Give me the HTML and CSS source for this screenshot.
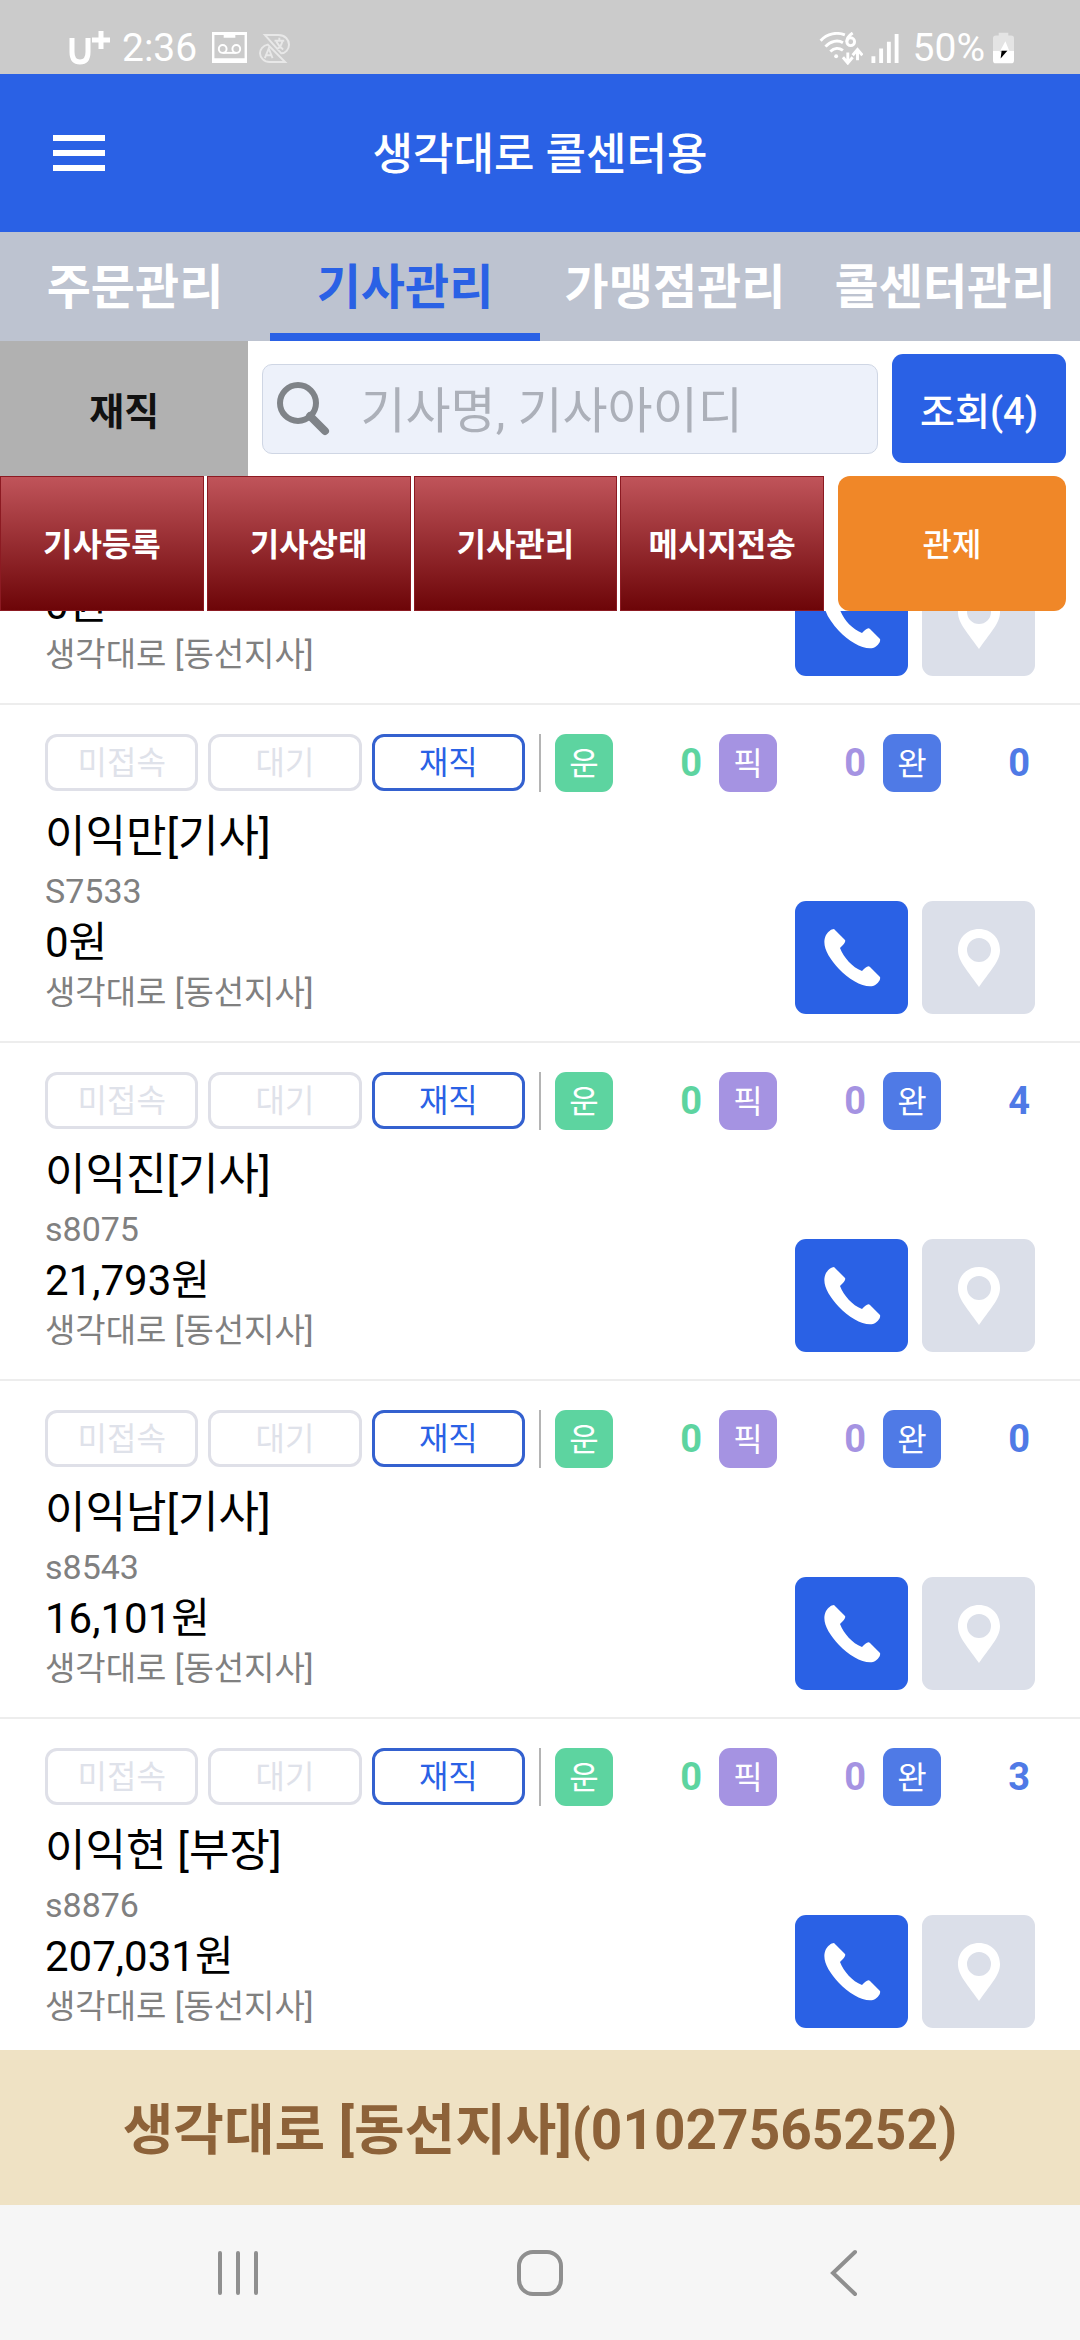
FILE: index.html
```html
<!DOCTYPE html>
<html lang="ko">
<head>
<meta charset="utf-8">
<meta name="viewport" content="width=device-width, initial-scale=1">
<title>생각대로 콜센터용</title>
<link rel="stylesheet" href="styles.css">
</head>
<body>
<svg class="defs" width="0" height="0" aria-hidden="true">
  <symbol id="phone" viewBox="0 0 58 58"><path d="M3 6C5 3 8 0 11 0l11 11c1 2-1 4-5 8 4 10 12 19 22 23 3-3 6-6 8-4l10 10c1 3-3 8-7 9-9 2-24-6-34-17C5 28-2 16 3 6z"/></symbol>
  <symbol id="pin" viewBox="0 0 42 58"><path fill-rule="evenodd" d="M21 0C9 0 0 9 0 21c0 10 6 16 21 37 15-21 21-27 21-37C42 9 33 0 21 0zm0 9a12 12 0 1 1 0 24 12 12 0 0 1 0-24z"/></symbol>
</svg>
<div class="app">
  <div class="status">
    <div class="status-side">
      <svg class="carrier" viewBox="0 0 42 34" aria-label="U+"><path d="M4 7v14c0 7 3 10 8 10s8-3 8-10V7M24 9h18M33 0v18" fill="none" stroke="#fff" stroke-width="5"/></svg>
      <span>2:36</span>
      <svg class="tape" viewBox="0 0 36 32" fill="none" stroke="#fff"><path d="M1 1h34v29H1z" stroke-width="3"/><path d="M12 3h12M2 29h32" stroke-width="5"/><circle cx="11" cy="17" r="4" stroke-width="2"/><circle cx="25" cy="17" r="4" stroke-width="2"/><path d="M11 21h14" stroke-width="2"/></svg>
      <svg class="translate" viewBox="0 0 32 30" fill="none" stroke="#e8e8e8" stroke-width="2"><path d="M6 1h14c7 0 11 5 11 10s-4 9-8 9zM9 11C4 12 1 16 1 20s4 9 10 9h16zM6 25l4-10 4 10M8 22h5M16 7h10M21 4v3M24 8c-1 4-4 7-6 8M18 8c2 4 4 6 7 8"/></svg>
    </div>
    <div class="status-side">
      <svg class="wifi" viewBox="0 0 44 34" fill="none" stroke="#fff" stroke-width="3"><path d="M1 9C8 1 18 0 26 3M6 15c5-6 13-7 18-4M11 20c4-4 9-4 13-1"/><circle cx="17" cy="25" r="2" fill="#fff" stroke="none"/><circle cx="32" cy="10" r="4"/><path d="M34 1c-3 2-6 5-6 9M29 21v10M24 26l5 6 5-6M39 29V19M34 24l5-6 5 6"/></svg>
      <svg class="signal" viewBox="0 0 28 30"><path fill="#fff" d="M0 23h4v7H0zM8 15h4v15H8zM16 8h4v22h-4zM24 0h4v30h-4z"/></svg>
      <span>50%</span>
      <svg class="battery" viewBox="0 0 22 32"><path fill="#e4e4e4" d="M6 0h10v3h3q3 0 3 3v13H0V6q0-3 3-3h3z"/><path fill="#fff" d="M0 19h22v10q0 3-3 3H3q-3 0-3-3zM13 9L7 20h5l5-1z"/><path d="M9 19h6l-7 8z"/></svg>
    </div>
  </div>

  <header class="header">
    <button class="menu" type="button" aria-label="메뉴"><span></span><span></span><span></span></button>
    <h1 class="title">생각대로 콜센터용</h1>
  </header>

  <nav class="tabs">
    <a class="tab" href="#orders">주문관리</a>
    <a class="tab tab-on" href="#drivers" aria-current="page">기사관리</a>
    <a class="tab" href="#shops">가맹점관리</a>
    <a class="tab" href="#center">콜센터관리</a>
  </nav>

  <form class="filter">
    <button class="filter-state" type="button">재직</button>
    <div class="filter-main">
      <label class="search">
        <svg class="search-icon" viewBox="0 0 54 54" fill="none" stroke="#7f8388"><circle cx="21" cy="21" r="18" stroke-width="6"/><path d="M33 34l15 15" stroke-width="8" stroke-linecap="round"/></svg>
        <input class="search-input" type="text" placeholder="기사명, 기사아이디" aria-label="기사 검색">
      </label>
      <button class="query" type="submit">조회(4)</button>
    </div>
  </form>

  <div class="actions">
    <div class="actions-red">
      <button class="action" type="button">기사등록</button>
      <button class="action" type="button">기사상태</button>
      <button class="action" type="button">기사관리</button>
      <button class="action" type="button">메시지전송</button>
    </div>
    <button class="control" type="button">관제</button>
  </div>

  <main class="list-view">
    <ul class="list" id="list"></ul>
  </main>

  <footer class="contact">생각대로 [동선지사](01027565252)</footer>

  <nav class="system">
    <button class="system-key" type="button" aria-label="최근 앱"><svg viewBox="0 0 48 48"><path d="M6 4v40M24 4v40M42 4v40"/></svg></button>
    <button class="system-key" type="button" aria-label="홈"><svg viewBox="0 0 48 48"><rect x="3" y="3" width="42" height="42" rx="14"/></svg></button>
    <button class="system-key" type="button" aria-label="뒤로"><svg viewBox="0 0 48 48"><path d="M37 3L15 24l22 21"/></svg></button>
  </nav>
</div>
<script src="list.js"></script>
</body>
</html>
```
FILE: list.js
```js
// The first row is scrolled under the toolbar, so only its lower lines are rendered.
const drivers = [
  { amount: '0원', scrolled: true },
  { name: '이익만[기사]', id: 'S7533', amount: '0원', done: 0 },
  { name: '이익진[기사]', id: 's8075', amount: '21,793원', done: 4 },
  { name: '이익남[기사]', id: 's8543', amount: '16,101원', done: 0 },
  { name: '이익현 [부장]', id: 's8876', amount: '207,031원', done: 3 },
];

const driverTop = (d) => `
    <div class="driver-top">
      <div class="pills">
        <span class="pill">미접속</span>
        <span class="pill">대기</span>
        <span class="pill pill-on">재직</span>
      </div>
      <div class="stats">
        <div class="stat stat-run"><span class="badge">운</span><b class="count">0</b></div>
        <div class="stat stat-pick"><span class="badge">픽</span><b class="count">0</b></div>
        <div class="stat stat-done"><span class="badge">완</span><b class="count">${d.done}</b></div>
      </div>
    </div>`;

const driverHeading = (d) => `
        <p class="name">${d.name}</p>
        <p class="driver-id">${d.id}</p>`;

document.getElementById('list').innerHTML = drivers.map((d) => `
  <li class="driver${d.scrolled ? ' driver-scrolled' : ''}">
    ${d.scrolled ? '' : driverTop(d)}
    <div class="driver-body">
      <div class="driver-info">
        ${d.scrolled ? '' : driverHeading(d)}
        <p class="amount">${d.amount}</p>
        <p class="branch">생각대로 [동선지사]</p>
      </div>
      <div class="driver-keys">
        <button class="key key-call" type="button" aria-label="전화"><svg class="icon-phone"><use href="#phone"/></svg></button>
        <button class="key key-pin" type="button" aria-label="위치"><svg class="icon-pin"><use href="#pin"/></svg></button>
      </div>
    </div>
  </li>`).join('');
```
FILE: styles.css
```css
* { box-sizing: border-box; }

body {
  margin: 0;
  background: #fff;
  color: #000;
  font-family: Roboto, "Noto Sans CJK KR", sans-serif;
}

button {
  margin: 0;
  padding: 0;
  border: 0;
  background: none;
  font: inherit;
  color: inherit;
  cursor: pointer;
}

svg { display: block; }
.defs { position: absolute; }

.app {
  display: flex;
  flex-direction: column;
  height: 100vh;
}

/* Status bar */
.status {
  display: flex;
  flex: none;
  justify-content: space-between;
  height: 74px;
  padding: 22px 66px 0 68px;
  background: #cbcbcb;
  color: #fff;
  font-size: 39px;
  line-height: 52px;
}
.status-side { display: flex; align-items: center; gap: 12px; }
.status-side:last-child { gap: 8px; }
.carrier { width: 42px; height: 34px; }
.tape { width: 35px; height: 32px; margin-left: 3px; }
.translate { width: 31px; height: 29px; }
.wifi { width: 44px; height: 33px; }
.signal { width: 28px; height: 29px; margin-right: 6px; }
.battery { width: 21px; height: 32px; }

/* Header */
.header {
  display: grid;
  flex: none;
  grid-template-columns: 158px 1fr 158px;
  align-items: center;
  height: 158px;
  background: #2a61e5;
  color: #fff;
}
.menu {
  display: flex;
  flex-direction: column;
  justify-content: center;
  gap: 9px;
  height: 100%;
  padding: 0 53px;
}
.menu span { width: 52px; height: 6px; background: #fff; }
.title {
  margin: 0;
  padding-top: 4px;
  font-size: 44px;
  font-weight: 500;
  line-height: 64px;
  text-align: center;
}

/* Tabs */
.tabs {
  display: grid;
  flex: none;
  grid-template-columns: repeat(4, 1fr);
  height: 109px;
  background: #bdc3d0;
}
.tab {
  height: 109px;
  padding-top: 4px;
  border-bottom: 8px solid transparent;
  color: #fff;
  font-size: 48px;
  font-weight: 700;
  line-height: 104px;
  text-align: center;
  text-decoration: none;
  white-space: nowrap;
}
.tab-on { border-color: #2a61e5; color: #2a61e5; }

/* Search row */
.filter { display: flex; flex: none; height: 135px; }
.filter-state {
  flex: none;
  width: 23%;
  background: #b1b1b1;
  color: #111;
  font-size: 38px;
  font-weight: 700;
}
.filter-main {
  display: flex;
  flex: 1;
  align-items: center;
  gap: 14px;
  min-width: 0;
  padding: 0 14px;
}
.search {
  display: flex;
  flex: 1;
  align-items: center;
  gap: 29px;
  min-width: 0;
  height: 90px;
  padding: 0 14px;
  border: 1px solid #cfd6e4;
  border-radius: 10px;
  background: #edf1fa;
}
.search-icon { flex: none; width: 54px; height: 54px; }
.search-input {
  flex: 1;
  min-width: 0;
  padding: 6px 0 0;
  border: 0;
  outline: 0;
  background: none;
  font: inherit;
  font-size: 49px;
  line-height: 70px;
}
.search-input::placeholder { color: #acb0b9; opacity: 1; }
.query {
  flex: none;
  width: 174px;
  height: 109px;
  border-radius: 11px;
  background: #2a61e5;
  color: #fff;
  font-size: 38px;
  font-weight: 500;
}

/* Action row */
.actions {
  display: flex;
  flex: none;
  gap: 14px;
  height: 135px;
  padding-right: 14px;
  color: #fff;
  font-size: 32px;
}
.actions-red {
  display: grid;
  flex: 1;
  grid-template-columns: repeat(4, 1fr);
  gap: 3px;
}
.action, .control { padding-bottom: 4px; }
.action {
  border: 1px solid #8c1a22;
  background: linear-gradient(#c0545a, #6d0508);
  font-weight: 700;
}
.control {
  width: 228px;
  border-radius: 12px;
  background: #f08728;
  font-weight: 500;
}

/* Driver list */
.list-view { flex: 1; min-height: 0; overflow: hidden; }
.list {
  margin: 0;
  padding: 0;
  list-style: none;
}
.driver {
  padding: 29px 45px 24px;
  border-bottom: 2px solid #ededed;
}
.driver-scrolled { margin-top: -48px; padding-top: 0; }
.driver-top {
  display: flex;
  align-items: flex-start;
  gap: 14px;
  margin-bottom: 17px;
}
.pills {
  display: grid;
  flex: 1;
  grid-template-columns: repeat(3, 1fr);
  gap: 10px;
}
.pill {
  height: 57px;
  border: 3px solid #dfe0e8;
  border-radius: 12px;
  color: #dfe2ea;
  font-size: 32px;
  line-height: 53px;
  text-align: center;
}
.pill-on { border-color: #3461cf; color: #2a61e5; }
.stats {
  display: grid;
  flex: 1;
  grid-template-columns: repeat(3, 1fr);
  gap: 12px;
  padding-left: 14px;
  border-left: 2px solid #b4b4b4;
}
.stat {
  display: flex;
  align-items: center;
  justify-content: space-between;
  padding-right: 5px;
}
.badge {
  width: 58px;
  height: 58px;
  border-radius: 11px;
  color: #fff;
  font-size: 32px;
  line-height: 60px;
  text-align: center;
}
.count { font-size: 38px; line-height: 58px; }
.stat-run { color: #5dd4a0; }
.stat-run .badge { background: #5dd4a0; }
.stat-pick { color: #a593e2; }
.stat-pick .badge { background: #a593e2; }
.stat-done { color: #4f7ae6; }
.stat-done .badge { background: #4f7ae6; }

.driver-body {
  display: flex;
  align-items: flex-end;
  justify-content: space-between;
}
.name, .driver-id { margin: 0; line-height: 54px; }
.amount, .branch { margin: 0; line-height: 50px; }
.name { padding-top: 1px; font-size: 44px; }
.driver-id { color: #808080; font-size: 34px; }
.amount { font-size: 42px; }
.branch { color: #808080; font-size: 33px; }
.driver-info { margin-bottom: -1px; }
.driver-keys { display: flex; gap: 14px; padding-bottom: 3px; }
.key {
  display: grid;
  place-items: center;
  width: 113px;
  height: 113px;
  border-radius: 11px;
  color: #fff;
}
.key-call { background: #2a61e5; }
.key-pin { background: #dbdfe9; }
.icon-phone { width: 58px; height: 58px; fill: #fff; }
.icon-pin { width: 42px; height: 58px; fill: #fff; }

/* Contact bar */
.contact {
  flex: none;
  height: 155px;
  background: #efe2c4;
  color: #8d6239;
  font-size: 55px;
  font-weight: 700;
  line-height: 160px;
  text-align: center;
  white-space: nowrap;
}

/* System keys */
.system {
  display: flex;
  flex: none;
  justify-content: center;
  height: 135px;
  background: #f6f6f6;
}
.system-key {
  display: grid;
  place-items: center;
  width: 28%;
}
.system-key svg {
  width: 48px;
  height: 48px;
  fill: none;
  stroke: #8f8f8f;
  stroke-width: 4;
  stroke-linecap: round;
}
```
